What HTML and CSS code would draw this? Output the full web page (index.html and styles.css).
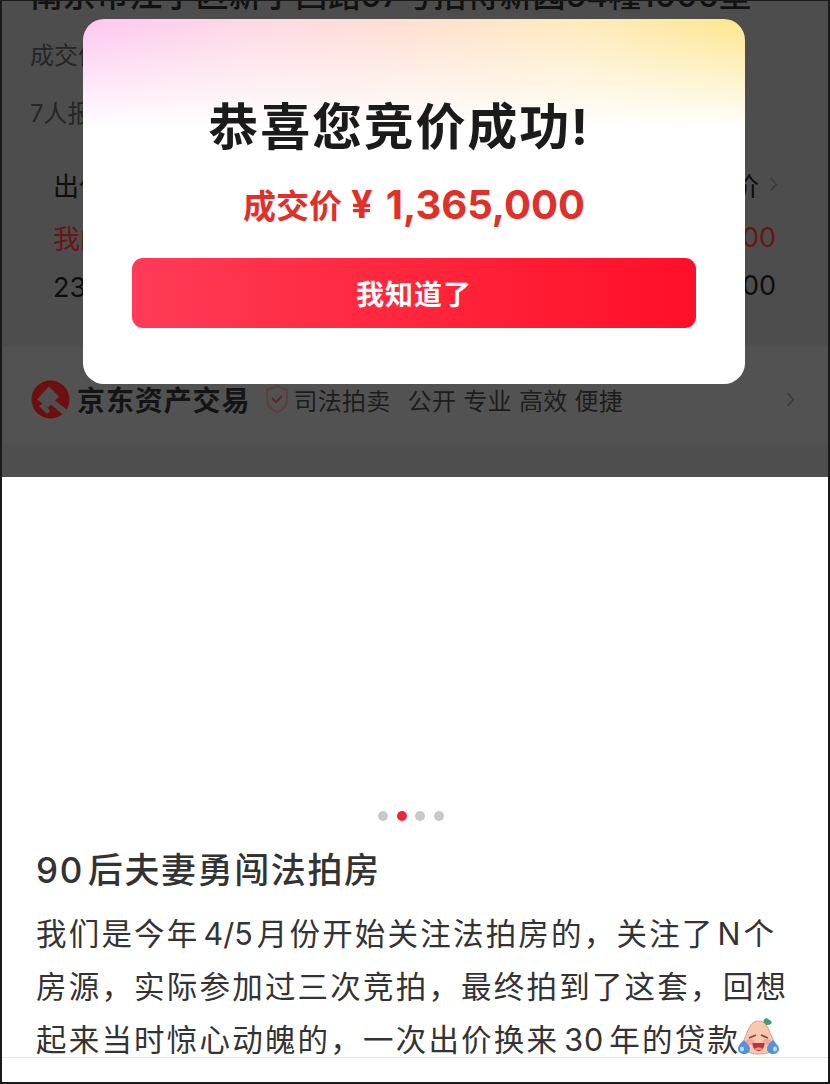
FILE: index.html
```html
<!DOCTYPE html>
<html lang="zh-CN">
<head>
<meta charset="utf-8">
<title>恭喜您竞价成功</title>
<link rel="stylesheet" href="styles.css">
</head>
<body>
<div class="frame">
  <section class="dim">
    <h1 class="addr">南京市江宁区新宁西路97号招待新园54幢1006室</h1>
    <p class="meta meta-first">成交价 ¥1,365,000</p>
    <p class="meta meta-second">7人报名 3人出价</p>
    <div class="bids">
      <div class="bid bid-head"><span>出价记录</span><span class="more">全部出价<svg class="chev" viewBox="0 0 10 18"><path d="M2 2l6 7-6 7"/></svg></span></div>
      <div class="bid bid-me"><span>我的出价</span><span>¥1,365,000</span></div>
      <div class="bid bid-other"><span>2387的出价</span><span>¥1,360,000</span></div>
    </div>
    <div class="brand">
      <svg class="logo" viewBox="0 0 39 39">
        <circle cx="19.5" cy="19.5" r="19" fill="#6e0f0f"/>
        <path d="M18 6.500l10 10-4 4 13 10-4 5-13-11-3 3-11-8z" fill="#4f4f4f"/>
        <path d="M8 26l5-3 6 8-3 3z" fill="#4f4f4f"/>
      </svg>
      <strong class="brand-name">京东资产交易</strong>
      <svg class="shield" viewBox="0 0 26 30">
        <path d="M13 2l10 4v10c0 6-5 10-10 12C8 26 3 22 3 16V6z" fill="none" stroke="#5a3f3a" stroke-width="2"/>
        <path d="M8 14l4 4 6-6" fill="none" stroke="#5a2a24" stroke-width="2"/>
      </svg>
      <span class="brand-tag">司法拍卖</span>
      <span class="brand-words">公开 专业 高效 便捷</span>
      <svg class="chev chev-brand" viewBox="0 0 10 18"><path d="M2 2l6 7-6 7"/></svg>
    </div>
  </section>

  <section class="modal">
    <h2 class="modal-title">恭喜您竞价成功!</h2>
    <p class="modal-price"><span class="price-label">成交价</span><span class="price-yen">¥</span><span class="price-num">1,365,000</span></p>
    <button class="modal-btn">我知道了</button>
  </section>

  <section class="story">
    <div class="dots"><i class="dot"></i><i class="dot dot-on"></i><i class="dot"></i><i class="dot"></i></div>
    <h3 class="story-title"><span class="num">90</span>后夫妻勇闯法拍房</h3>
    <p class="story-body">我们是今年<span class="lat lat-wide">4/5</span>月份开始关注法拍房的，关注了<span class="lat">N</span>个<br>房源，实际参加过三次竞拍，最终拍到了这套，回想<br>起来当时惊心动魄的，一次出价换来<span class="lat lat-year">30</span>年的贷款<svg class="emoji" viewBox="0 0 42 42">
        <path d="M25 8c0-3 1-5 3-6 2 1 5 2 6 5-2 2-6 3-9 1z" fill="#3f9b7c"/>
        <path d="M20.500 5C14 5 11 11 9 17 6 23 4 28 7 33c3 4 8 5 14 5s11-1 14-5c3-5 0-10-3-16-2-6-5-12-11.500-12z" fill="#f9c8b0" stroke="#e09a80" stroke-width="1"/>
        <ellipse cx="12" cy="26" rx="4.500" ry="3" fill="#f4a59c"/>
        <ellipse cx="29" cy="26" rx="4.500" ry="3" fill="#f4a59c"/>
        <path d="M11 22l7-3M30 22l-7-3" stroke="#9c4034" stroke-width="1.800" fill="none"/>
        <path d="M14.500 27h12c0 5-2.500 8-6 8s-6-3-6-8z" fill="#b93636"/>
        <path d="M16.500 32.500c2-1.500 6-1.500 8 0-1 2-7 2-8 0z" fill="#f19a96"/>
        <path d="M6 24c-3 3-6 5-6 9 0 3 3 5 6 5s6-2 6-5c0-4-4-6-6-9z" fill="#4f94dc"/>
        <path d="M35 24c-3 3-6 5-6 9 0 3 3 5 6 5s6-2 6-5c0-4-4-6-6-9z" fill="#4f94dc"/>
        <ellipse cx="4" cy="33" rx="2" ry="2.500" fill="#bcdcf8"/>
        <ellipse cx="37" cy="33" rx="2" ry="2.500" fill="#bcdcf8"/>
      </svg></p>
    <div class="rule"></div>
  </section>
</div>
</body>
</html>
```

FILE: styles.css
```css
* { box-sizing: border-box; margin: 0; padding: 0; }
html, body { background: #fff; }
body {
  width: 830px;
  height: 1084px;
  overflow: hidden;
  font-family: "Inter", "Noto Sans CJK SC", sans-serif;
}
.frame {
  position: relative;
  width: 830px;
  height: 1084px;
  border: 2px solid #1a1a1a;
  border-top-width: 1px;
  overflow: hidden;
  background: #fff;
}

/* dimmed page behind the dialog */
.dim {
  height: 476px;
  overflow: hidden;
  background: linear-gradient(#4d4d4d 0, #4d4d4d 344px, #525252 346px, #525252 440px, #4e4e4e 446px);
  padding-left: 28px;
  padding-right: 28px;
  color: #1f1f1f;
}
.addr {
  margin-top: -27px;
  font-size: 33px;
  line-height: 42px;
  font-weight: 500;
  color: #111;
  letter-spacing: .1px;
  white-space: nowrap;
}
.meta {
  font-size: 24px;
  line-height: 34px;
  color: #262626;
  white-space: nowrap;
}
.meta-first { margin-top: 23px; }
.meta-second { margin-top: 24px; }
.bids {
  margin-top: 27px;
  padding: 0 24px 0 23px;
  display: flex;
  flex-direction: column;
}
.bid {
  display: flex;
  align-items: center;
  justify-content: space-between;
  font-size: 27px;
  color: #0d0d0d;
}
.bid-head { font-size: 26px; height: 53px; }
.bid-me { color: #6a1515; height: 52px; }
.bid-other { height: 45px; }
.more { display: flex; align-items: center; gap: 10px; margin-right: -2px; }
.chev { width: 9px; height: 17px; flex: none; }
.chev path { fill: none; stroke: #3a3a3a; stroke-width: 1.6; }
.brand {
  margin-top: 71px;
  height: 40px;
  display: flex;
  align-items: center;
  padding-left: 1px;
}
.logo { width: 39px; height: 39px; flex: none; }
.brand-name { margin-left: 7px; font-size: 28px; font-weight: 700; color: #141414; white-space: nowrap; letter-spacing: .9px; }
.shield { margin-left: 14px; width: 26px; height: 30px; flex: none; }
.brand-tag { margin-left: 3px; font-size: 24px; color: #1d1d1d; white-space: nowrap; letter-spacing: .3px; }
.brand-words { margin-left: 17px; font-size: 24px; color: #1d1d1d; white-space: nowrap; letter-spacing: .3px; }
.chev-brand { margin-left: auto; margin-right: 5px; }

/* dialog */
.modal {
  position: absolute;
  left: 81px;
  top: 18px;
  width: 662px;
  height: 365px;
  border-radius: 21px;
  display: flex;
  flex-direction: column;
  align-items: center;
  background:
    linear-gradient(rgba(255,255,255,0) 0, #fff 110px),
    linear-gradient(90deg, #fcc6f0 0, #fdd8e4 25%, #fedfd0 50%, #feeabc 75%, #fde68c 100%);
}
.modal-title {
  margin-top: 75px;
  margin-right: 30px;
  font-size: 50px;
  line-height: 66px;
  font-weight: 700;
  color: #1b1b1b;
  letter-spacing: 1.800px;
  white-space: nowrap;
}
.modal-price {
  margin-top: 18px;
  display: flex;
  align-items: center;
  color: #e0302a;
  font-weight: 700;
  white-space: nowrap;
  height: 52px;
}
.price-label { font-size: 33px; }
.price-yen { margin-left: 9px; font-size: 38px; }
.price-num { margin-left: 13px; font-size: 40px; }
.modal-btn {
  margin-top: 28px;
  width: 564px;
  height: 70px;
  border: 0;
  border-radius: 11px;
  background: linear-gradient(90deg, #ff3b58 0, #ff2a40 40%, #ff0f28 100%);
  color: #fff;
  font: 700 28px "Noto Sans CJK SC", sans-serif;
  letter-spacing: 1px;
}

/* white story */
.story {
  position: relative;
  height: 605px;
  padding: 334px 34px 0;
  background: #fff;
}
.dots {
  display: flex;
  justify-content: center;
  gap: 8.500px;
  height: 10px;
  margin-left: -8px;
}
.dot { width: 10px; height: 10px; border-radius: 50%; background: #c9c9c9; }
.dot-on { background: #ee2438; }
.story-title {
  margin-top: 24px;
  font-size: 35px;
  line-height: 50px;
  font-weight: 500;
  color: #333;
  letter-spacing: 1.600px;
  white-space: nowrap;
}
.num { margin-right: 4px; }
.story-body {
  margin-top: 12px;
  font-size: 30.500px;
  line-height: 53px;
  letter-spacing: 2.200px;
  color: #333;
  white-space: nowrap;
}
.lat { letter-spacing: 0; margin: 0 3px; }
.lat-wide { margin: 0 4px; }
.lat-year { margin: 0 5px; letter-spacing: 1px; }
.emoji { width: 42px; height: 42px; vertical-align: -7px; margin-left: -2px; }
.rule {
  position: absolute;
  left: 0;
  right: 0;
  bottom: 24px;
  height: 1px;
  background: #e6e6e6;
}
```
